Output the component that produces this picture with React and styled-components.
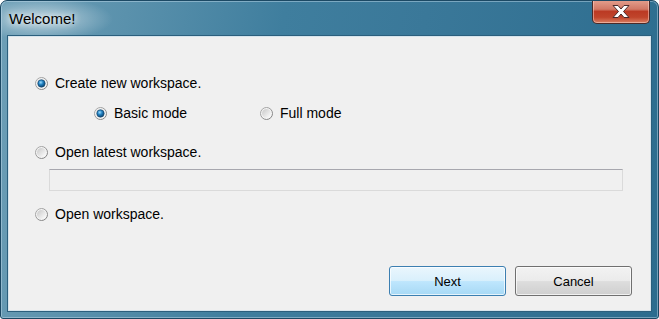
import React from 'react';
import styled, { createGlobalStyle } from 'styled-components';

const GlobalStyle = createGlobalStyle`
    html, body {
        margin: 0;
        padding: 0;
        background: #ffffff;
    }
    body {
        font-family: "Liberation Sans", Arial, sans-serif;
    }
`;

function Radio({ checked }) {
    return (
        <RadioIcon width="13" height="13" viewBox="0 0 13 13">
            <defs>
                <linearGradient id="rOuter" x1="0" y1="0" x2="1" y2="1">
                    <stop offset="0" stopColor="#b0b0b0" />
                    <stop offset="1" stopColor="#7a7a7a" />
                </linearGradient>
                <linearGradient id="rInner" x1="0" y1="0" x2="1" y2="1">
                    <stop offset="0" stopColor="#c8c8c8" />
                    <stop offset="1" stopColor="#ffffff" />
                </linearGradient>
                <radialGradient id="rDot" cx="0.4" cy="0.35" r="0.7">
                    <stop offset="0" stopColor="#9bdcff" />
                    <stop offset="0.45" stopColor="#1f7fc0" />
                    <stop offset="1" stopColor="#0b3a60" />
                </radialGradient>
            </defs>
            <circle cx="6.5" cy="6.5" r="6" fill="#f4f4f4" stroke="url(#rOuter)" strokeWidth="1" />
            <circle cx="6.5" cy="6.5" r="4.5" fill="url(#rInner)" />
            {checked && <circle cx="6.5" cy="6.5" r="3.7" fill="url(#rDot)" stroke="#174a70" strokeWidth="0.6" />}
        </RadioIcon>
    );
}

function App() {
    return (
        <>
            <GlobalStyle />
            <Window>
                <TitleBar>
                    <Title>Welcome!</Title>
                    <CloseButton>
                        <svg width="22" height="15" viewBox="0 0 22 15">
                            <path
                                d="M3 1.5 H8 L11 5 L14 1.5 H19 L13.5 7.5 L19 13.5 H14 L11 10 L8 13.5 H3 L8.5 7.5 Z"
                                fill="#ffffff"
                                stroke="#4a2a2a"
                                strokeWidth="1"
                                strokeLinejoin="round"
                            />
                        </svg>
                    </CloseButton>
                </TitleBar>
                <Client>
                    <Option>
                        <Radio checked />
                        <Label>Create new workspace.</Label>
                    </Option>
                    <SubOptions>
                        <SubOption>
                            <Radio checked />
                            <Label>Basic mode</Label>
                        </SubOption>
                        <SubOption>
                            <Radio />
                            <Label>Full mode</Label>
                        </SubOption>
                    </SubOptions>
                    <Option $top={26}>
                        <Radio />
                        <Label>Open latest workspace.</Label>
                    </Option>
                    <PathBox />
                    <Option $top={17}>
                        <Radio />
                        <Label>Open workspace.</Label>
                    </Option>
                    <ButtonRow>
                        <Button $primary>Next</Button>
                        <Button>Cancel</Button>
                    </ButtonRow>
                </Client>
            </Window>
        </>
    );
}

const Window = styled.div`
    width: 659px;
    height: 319px;
    box-sizing: border-box;
    display: flex;
    flex-direction: column;
    border: 1px solid #1c4964;
    border-radius: 7px 7px 3px 3px;
    background:
        radial-gradient(ellipse 70px 22px at 42px 18px, rgba(255, 255, 255, 0.55), rgba(255, 255, 255, 0) 100%),
        linear-gradient(100deg, #6d9fb7 0%, #5a91ac 18%, #3f7e9e 40%, #3a7899 60%, #2c6c8e 100%);
    overflow: hidden;
    box-shadow: inset 0 0 0 1px rgba(200, 225, 240, 0.45);
`;

const TitleBar = styled.div`
    height: 35px;
    display: flex;
    align-items: flex-start;
    justify-content: space-between;
`;

const Title = styled.div`
    margin: 9px 0 0 8px;
    font-family: "Liberation Sans", Arial, sans-serif;
    font-size: 15px;
    color: #000000;
    text-shadow: 0 0 6px rgba(255, 255, 255, 0.9), 0 0 10px rgba(255, 255, 255, 0.6);
`;

const CloseButton = styled.div`
    width: 58px;
    height: 24px;
    margin: -1px 8px 0 0;
    box-sizing: border-box;
    display: flex;
    align-items: center;
    justify-content: center;
    border: 1px solid #4b2a28;
    border-top: none;
    border-radius: 0 0 5px 5px;
    background: linear-gradient(180deg, #e4a08f 0%, #d17865 40%, #bb3a24 50%, #c0442b 75%, #d97f62 100%);
    box-shadow: inset 0 0 0 1px rgba(255, 220, 210, 0.5);
`;

const Client = styled.div`
    flex: 1;
    margin: 0 7px 7px 7px;
    box-sizing: border-box;
    display: flex;
    flex-direction: column;
    padding: 40px 18px 14px 26px;
    background: #f0f0f0;
    border: 1px solid #d6e4ec;
    box-shadow: 0 0 0 1px #2b5f7d;
    font-family: "Liberation Sans", Arial, sans-serif;
    font-size: 14px;
    color: #000000;
`;

const Option = styled.div`
    display: flex;
    align-items: center;
    height: 13px;
    margin-top: ${p => p.$top || 0}px;
`;

const SubOptions = styled.div`
    display: flex;
    height: 13px;
    margin: 17px 0 0 59px;
`;

const SubOption = styled.div`
    display: flex;
    align-items: center;
    width: 166px;
`;

const RadioIcon = styled.svg`
    flex: none;
    display: block;
`;

const Label = styled.span`
    margin-left: 7px;
    line-height: 13px;
    white-space: nowrap;
`;

const PathBox = styled.div`
    width: 574px;
    height: 22px;
    box-sizing: border-box;
    margin: 10px 0 0 14px;
    background: #f0f0f0;
    border: 1px solid #dadada;
    border-top-color: #a7a7ae;
`;

const ButtonRow = styled.div`
    margin-top: auto;
    display: flex;
    justify-content: flex-end;
    gap: 9px;
`;

const Button = styled.div`
    width: 117px;
    height: 30px;
    box-sizing: border-box;
    display: flex;
    align-items: center;
    justify-content: center;
    border-radius: 3px;
    border: 1px solid ${p => (p.$primary ? '#3c7fb1' : '#707070')};
    background: ${p =>
        p.$primary
            ? 'linear-gradient(180deg, #eaf6fd 0%, #d9f0fc 48%, #bee6fd 52%, #a7d9f5 100%)'
            : 'linear-gradient(180deg, #f2f2f2 0%, #ebebeb 48%, #dddddd 52%, #cfcfcf 100%)'};
    box-shadow: inset 0 0 0 1px rgba(255, 255, 255, 0.7);
    font-size: 13px;
`;

export default App;
